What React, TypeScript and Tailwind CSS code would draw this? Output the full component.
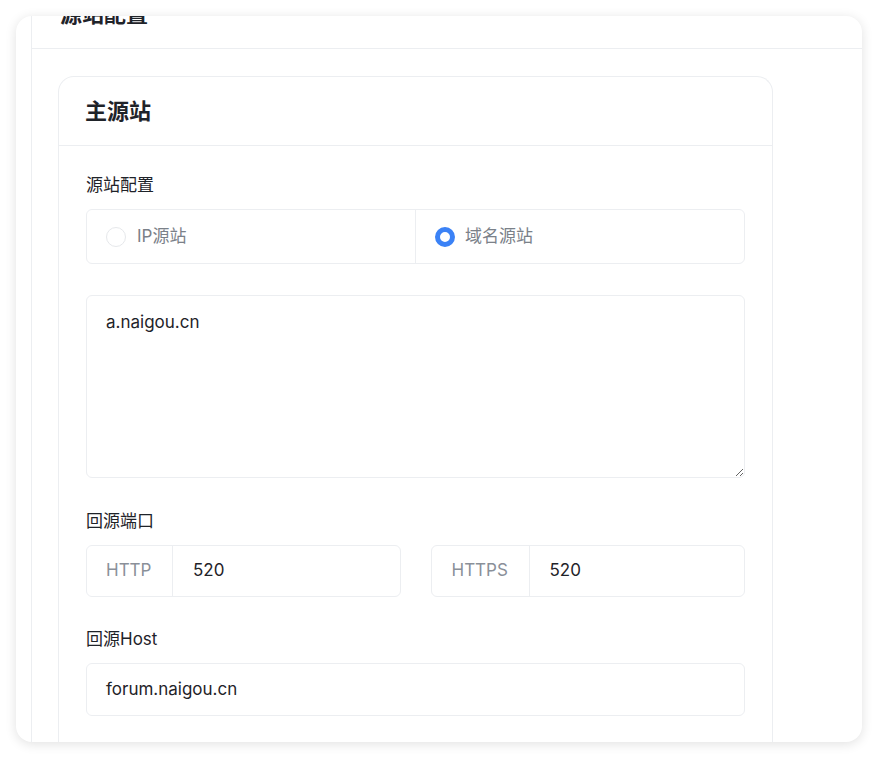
import React from 'react'

const font = { fontFamily: 'Inter, "Noto Sans CJK SC", sans-serif' }

function Label({ children }: { children: React.ReactNode }) {
  return <div className="text-[17px] leading-6 text-[#1f2329] mb-3">{children}</div>
}

export default function App() {
  return (
    <div className="w-[878px] h-[758px] bg-white p-4 pb-4" style={font}>
      <div className="h-[726px] w-[846px] rounded-2xl bg-white shadow-[0_2px_12px_rgba(0,0,0,0.12)] overflow-hidden pl-[15px]">
        <div className="h-[760px] border-l border-[#eceef1] -mt-[24px]">
          <div className="h-[57px] border-b border-[#eceef1] px-7 pb-3 flex items-center">
            <span className="text-[22px] font-bold text-[#1f2329]">源站配置</span>
          </div>
          <div className="pt-[27px] pl-[26px]">
            <div className="w-[715px] rounded-t-2xl border border-b-0 border-[#eceef1] h-[700px]">
              <div className="h-[69px] border-b border-[#eceef1] px-[26px] flex items-center">
                <span className="text-[22px] font-bold text-[#1f2329]">主源站</span>
              </div>
              <div className="px-[27px] pt-[27px]">
                <Label>源站配置</Label>
                <div className="flex h-[55px] rounded-md border border-[#eceef1]">
                  <div className="flex-1 flex items-center pl-[19px] gap-[11px] border-r border-[#eceef1]">
                    <span className="w-5 h-5 rounded-full border border-[#e6e8eb] bg-white" />
                    <span className="text-[17px] text-[#7b8189]">IP源站</span>
                  </div>
                  <div className="flex-1 flex items-center pl-[19px] gap-[10px]">
                    <span className="w-5 h-5 rounded-full border-[5px] border-[#3b82f6] bg-white" />
                    <span className="text-[17px] text-[#7b8189]">域名源站</span>
                  </div>
                </div>
                <textarea
                  className="mt-[31px] block w-full h-[183px] rounded-md border border-[#eceef1] px-[19px] py-[14px] text-[17px] text-[#1f2329] outline-none"
                  defaultValue="a.naigou.cn"
                  style={font}
                />
                <div className="mt-[31px]">
                  <Label>回源端口</Label>
                  <div className="flex gap-[30px]">
                    <div className="flex-1 flex h-[52px] rounded-md border border-[#eceef1]">
                      <div className="w-[86px] flex items-center pl-[19px] border-r border-[#eceef1] text-[17px] text-[#8a9099]">HTTP</div>
                      <div className="flex items-center pl-[20px] text-[17px] text-[#1f2329]">520</div>
                    </div>
                    <div className="flex-1 flex h-[52px] rounded-md border border-[#eceef1]">
                      <div className="w-[98px] flex items-center pl-[20px] border-r border-[#eceef1] text-[17px] text-[#8a9099]">HTTPS</div>
                      <div className="flex items-center pl-[20px] text-[17px] text-[#1f2329]">520</div>
                    </div>
                  </div>
                </div>
                <div className="mt-[30px]">
                  <Label>回源Host</Label>
                  <div className="flex items-center h-[53px] rounded-md border border-[#eceef1] pl-[19px] text-[17px] text-[#1f2329]">
                    forum.naigou.cn
                  </div>
                </div>
              </div>
            </div>
          </div>
        </div>
      </div>
    </div>
  )
}
